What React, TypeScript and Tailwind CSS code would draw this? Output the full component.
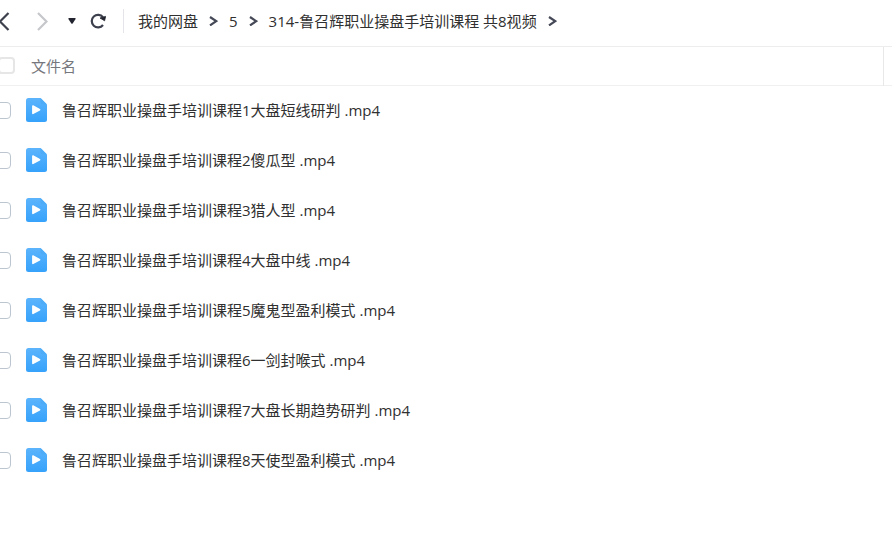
import React from 'react';

const CRUMBS = ['我的网盘', '5', '314-鲁召辉职业操盘手培训课程 共8视频'];

const FILES = [
  '鲁召辉职业操盘手培训课程1大盘短线研判 .mp4',
  '鲁召辉职业操盘手培训课程2傻瓜型 .mp4',
  '鲁召辉职业操盘手培训课程3猎人型 .mp4',
  '鲁召辉职业操盘手培训课程4大盘中线 .mp4',
  '鲁召辉职业操盘手培训课程5魔鬼型盈利模式 .mp4',
  '鲁召辉职业操盘手培训课程6一剑封喉式 .mp4',
  '鲁召辉职业操盘手培训课程7大盘长期趋势研判 .mp4',
  '鲁召辉职业操盘手培训课程8天使型盈利模式 .mp4',
];

function BackIcon() {
  return (
    <svg width="12" height="20" viewBox="0 0 12 20" fill="none" stroke="#3d404d" strokeWidth="2.2" aria-hidden="true">
      <path d="M8.5 2 0 10.5 8.5 19" />
    </svg>
  );
}

function ForwardIcon() {
  return (
    <svg width="12" height="20" viewBox="0 0 12 20" fill="none" stroke="#c6c7cb" strokeWidth="2.2" aria-hidden="true">
      <path d="M2 2 10.5 10.5 2 19" />
    </svg>
  );
}

function CaretIcon() {
  return (
    <svg width="8" height="6" viewBox="0 0 8 6" fill="#22252f" aria-hidden="true">
      <path d="M1 0h6q1 0 .6.9L4.8 5.2q-.8 1-1.6 0L.4.9Q0 0 1 0Z" />
    </svg>
  );
}

function RefreshIcon() {
  return (
    <svg width="16" height="16" viewBox="0 0 16 16" fill="none" aria-hidden="true">
      <path d="M13 12A6.3 6.3 0 1 1 13 4.2" stroke="#3d404d" strokeWidth="2.2" />
      <path d="M10 5 15.6 3.4 14.6 7.8Z" fill="#22252f" stroke="#22252f" strokeWidth="0.8" strokeLinejoin="round" />
    </svg>
  );
}

function CrumbArrow() {
  return (
    <svg className="shrink-0" width="9" height="10" viewBox="0 0 9 10" fill="none" stroke="#454957" strokeWidth="2.2" aria-hidden="true">
      <path d="M1 1 7.2 5.2 1 9.4" />
    </svg>
  );
}

function VideoIcon() {
  return (
    <svg className="shrink-0" width="21" height="24" viewBox="0 0 21 24" aria-hidden="true">
      <defs>
        <linearGradient id="video-fill" x1="0" y1="0" x2="0" y2="1">
          <stop offset="0" stopColor="#5cb4fc" />
          <stop offset="1" stopColor="#36a2fb" />
        </linearGradient>
      </defs>
      <path d="M2.5 0H14.5L21 6.5V21.5Q21 24 18.5 24H2.5Q0 24 0 21.5V2.5Q0 0 2.5 0Z" fill="url(#video-fill)" />
      <path d="M14.5 0 21 6.5H17Q14.5 6.5 14.5 4Z" fill="#4dabf8" />
      <path d="M6.9 8 13.6 11.7 6.9 15.4Z" fill="#fff" stroke="#fff" strokeWidth="1.6" strokeLinejoin="round" />
    </svg>
  );
}

function Toolbar() {
  return (
    <header className="flex items-center border-b border-[#ededee] pt-[9px] pb-[13px]">
      <button type="button" aria-label="后退"><BackIcon /></button>
      <button type="button" aria-label="前进" disabled className="ml-6"><ForwardIcon /></button>
      <button type="button" aria-label="历史记录" className="ml-5"><CaretIcon /></button>
      <button type="button" aria-label="刷新" className="ml-3.5"><RefreshIcon /></button>
      <span className="ml-[17px] h-6 w-px bg-[#e4e5e8]" aria-hidden="true" />
      <nav aria-label="路径" className="ml-3.5 flex min-w-0 items-center whitespace-nowrap">
        {CRUMBS.map((name) => (
          <span key={name} className="mr-[11px] flex items-center gap-[11px]">
            <a href="#" className="leading-6">{name}</a>
            <CrumbArrow />
          </span>
        ))}
      </nav>
    </header>
  );
}

export default function App() {
  const [selected, setSelected] = React.useState<string[]>([]);

  const toggle = (name: string) =>
    setSelected((prev) => (prev.includes(name) ? prev.filter((n) => n !== name) : [...prev, name]));

  return (
    <div className="min-h-screen overflow-hidden bg-white font-['Open_Sans','Noto_Sans_CJK_SC',sans-serif] text-[15px] text-[#303030]">
      <Toolbar />
      <table className="w-full table-fixed border-collapse">
        <thead>
          <tr className="h-[38px] border-b border-[#f0f0f1]">
            <th scope="col" className="p-0 text-left font-normal text-[#76777c]">
              <div className="flex items-center">
                <input
                  type="checkbox"
                  aria-label="全选"
                  checked={selected.length === FILES.length}
                  onChange={() => setSelected(selected.length === FILES.length ? [] : FILES)}
                  className="-ml-0.5 size-[17px] shrink-0 appearance-none rounded border-2 border-[#e6e6e7] checked:bg-[#36a2fb]"
                />
                <span className="ml-4 leading-6">文件名</span>
              </div>
            </th>
            <th className="w-[9px] border-l border-[#e8e8ea] p-0" aria-hidden="true" />
          </tr>
        </thead>
        <tbody>
          {FILES.map((name, i) => (
            <tr key={name} className="h-[50px]">
              <td colSpan={2} className="p-0">
                <div className="flex items-center">
                  <input
                    id={`file-${i}`}
                    type="checkbox"
                    checked={selected.includes(name)}
                    onChange={() => toggle(name)}
                    className="-ml-1.5 size-[17px] shrink-0 appearance-none rounded border border-[#bcc6d0] checked:bg-[#36a2fb]"
                  />
                  <label htmlFor={`file-${i}`} className="ml-[15px] flex items-center gap-[15px] whitespace-nowrap leading-6">
                    <VideoIcon />
                    {name}
                  </label>
                </div>
              </td>
            </tr>
          ))}
        </tbody>
      </table>
    </div>
  );
}
